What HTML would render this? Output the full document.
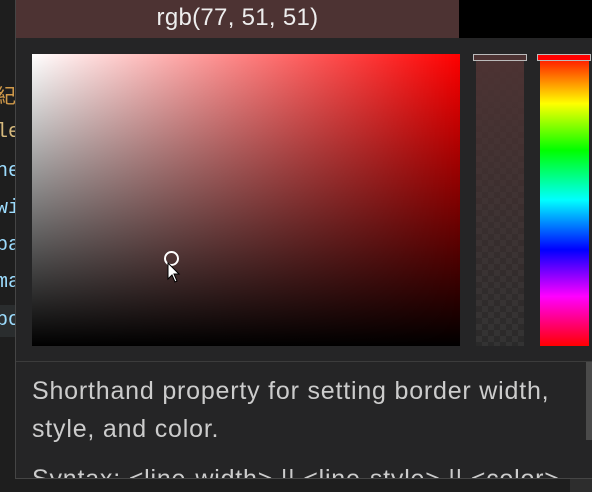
<html><head><style>
body{margin:0;width:592px;height:492px;background:#1e1e1e;overflow:hidden;position:relative;font-family:"Liberation Sans",sans-serif}
.code{position:absolute;left:-4px;font-family:"Liberation Mono",monospace;font-size:20px;color:#9cdcfe}
#pop{position:absolute;left:15px;top:0;width:577px;height:478px;background:#252526;border-left:1px solid #454545;border-bottom:1px solid #454545;overflow:hidden}
</style></head><body>
<div style="position:absolute;left:0;top:305px;width:15px;height:32px;background:#2a2d2e"></div>
<div class="code" style="top:80px;color:#d19a4a">紀</div>
<div class="code" style="top:121px;color:#d7ba7d">le</div>
<div class="code" style="top:160px">ne</div>
<div class="code" style="top:197px">wi</div>
<div class="code" style="top:234px">pa</div>
<div class="code" style="top:271px">ma</div>
<div class="code" style="top:309px">bo</div>
<div id="pop">
<div style="position:absolute;left:0;top:0;width:443px;height:38px;background:#4d3333;color:#eee;font-size:24px;letter-spacing:0.3px;text-align:center;line-height:36px">rgb(77, 51, 51)</div>
<div style="position:absolute;left:443px;top:0;width:134px;height:38px;background:#000"></div>
<div style="position:absolute;left:16px;top:54px;width:428px;height:292px;background:linear-gradient(to top,#000,rgba(0,0,0,0)),linear-gradient(to right,#fff,#f00)"></div>
<div style="position:absolute;left:148px;top:251px;width:15px;height:15px;border:2px solid #fff;border-radius:50%;box-sizing:border-box"></div>
<svg style="position:absolute;left:151px;top:262px" width="14" height="22"><path d="M1 1 L1 17 L5 13 L8 20 L10 19 L7 12 L12 12 Z" fill="#fff" stroke="#000"/></svg>
<div style="position:absolute;left:460px;top:54px;width:48px;height:292px;background:linear-gradient(#4d3333,rgba(77,51,51,0)),repeating-conic-gradient(#333 0 25%,#2a2a2a 0 50%) 0 0/12px 12px"></div>
<div style="position:absolute;left:524px;top:54px;width:49px;height:292px;background:linear-gradient(#f00,#ff0 17%,#0f0 33%,#0ff 50%,#00f 67%,#f0f 83%,#f00)"></div>
<div style="position:absolute;left:457px;top:54px;width:52px;height:5px;border:1px solid #bbb;background:#4d3333"></div>
<div style="position:absolute;left:521px;top:54px;width:52px;height:5px;border:1px solid #bbb;background:#f00"></div>
<div style="position:absolute;left:0;top:361px;width:577px;height:1px;background:#3c3c3c"></div>
<div style="position:absolute;left:16px;top:372px;width:545px;color:#ccc;font-size:25px;letter-spacing:0.8px;line-height:38px;white-space:nowrap">Shorthand property for setting border width,<br>style, and color.<br><span style="position:relative;top:12px">Syntax: &lt;line-width&gt; || &lt;line-style&gt; || &lt;color&gt;</span></div>
<div style="position:absolute;left:570px;top:362px;width:7px;height:78px;background:#4a4a4a"></div>
</div>
<div style="position:absolute;left:0;top:479px;width:592px;height:13px;background:#1e1e1e"></div>
<div style="position:absolute;left:570px;top:479px;width:22px;height:13px;background:#2d2d2d"></div>
</body></html>
